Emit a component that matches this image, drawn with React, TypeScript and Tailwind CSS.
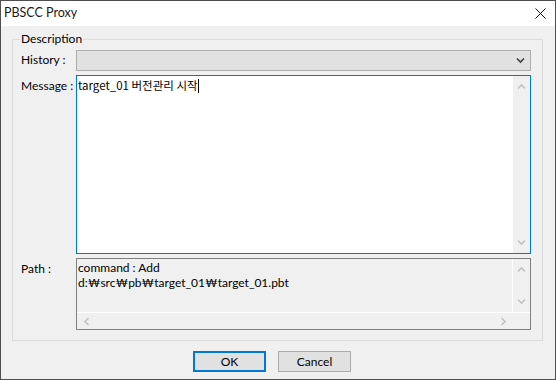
import React from "react"

const font = { fontFamily: 'Lato, "Noto Sans CJK KR", sans-serif' }

function Chevron({ dir, color = "#c2c2c2" }: { dir: "up" | "down" | "left" | "right"; color?: string }) {
    const rot = { down: 0, up: 180, left: 90, right: -90 }[dir]
    return (
        <svg width="9" height="9" viewBox="0 0 9 9" style={{ transform: `rotate(${rot}deg)` }}>
            <path d="M1 2.5 L4.5 6 L8 2.5" fill="none" stroke={color} strokeWidth="1.6" />
        </svg>
    )
}

function VScroll() {
    return (
        <div className="w-[17px] shrink-0 flex flex-col items-center justify-between py-[6px] bg-[#f0f0f0]">
            <Chevron dir="up" />
            <Chevron dir="down" />
        </div>
    )
}

export default function App() {
    return (
        <div
            className="w-[556px] h-[380px] border border-[#4f4f4f] bg-[#f0f0f0] flex flex-col text-[12px] text-black leading-none"
            style={font}
        >
            {/* title bar */}
            <div className="h-[25px] bg-white flex items-center justify-between pl-[3px] pr-[9px]">
                <span className="text-[12.5px] text-[#1a1a1a]">PBSCC Proxy</span>
                <svg width="11" height="11" viewBox="0 0 11 11">
                    <path d="M0.5 0.5 L10.5 10.5 M10.5 0.5 L0.5 10.5" stroke="#111" strokeWidth="1" />
                </svg>
            </div>

            {/* group box */}
            <div className="relative mt-[13px] ml-[11px] w-[531px] h-[302px] border border-[#dcdcdc] pt-[10px] pl-[8px]">
                <span className="absolute left-[7px] top-[-7px] bg-[#f0f0f0] px-[1px]">Description</span>

                <div className="flex flex-col gap-[4px]">
                    <div className="flex">
                        <span className="w-[55px] shrink-0 whitespace-nowrap pt-[4px]">History :</span>
                        <div className="w-[455px] h-[21px] border border-[#adadad] bg-[#e1e1e1] flex items-center justify-end pr-[5px]">
                            <Chevron dir="down" color="#404040" />
                        </div>
                    </div>

                    <div className="flex">
                        <span className="w-[55px] shrink-0 whitespace-nowrap pt-[5px]">Message :</span>
                        <div className="w-[455px] h-[179px] border border-[#0078d7] bg-white flex">
                            <div className="flex-1 pl-[1px] pt-[4px] flex items-start">
                                <span style={{ fontFamily: '"Noto Sans CJK KR", sans-serif' }} className="text-[11.5px]">
                                    target_01 버전관리 시작
                                </span>
                                <span className="w-[1px] h-[14px] bg-black -mt-[1px]" />
                            </div>
                            <VScroll />
                        </div>
                    </div>

                    <div className="flex">
                        <span className="w-[55px] shrink-0 whitespace-nowrap pt-[5px]">Path :</span>
                        <div className="w-[455px] h-[72px] border border-[#808080] bg-[#f0f0f0] flex flex-col">
                            <div className="flex flex-1">
                                <div className="flex-1 pl-[1px] pt-[3px] flex flex-col gap-[3px] border-r border-white">
                                    <span>command : Add</span>
                                    <span>d:₩src₩pb₩target_01₩target_01.pbt</span>
                                </div>
                                <VScroll />
                            </div>
                            <div className="h-[17px] flex border-t border-white">
                                <div className="flex-1 flex items-center justify-between px-[5px]">
                                    <Chevron dir="left" />
                                    <Chevron dir="right" />
                                </div>
                                <div className="w-[17px]" />
                            </div>
                        </div>
                    </div>
                </div>
            </div>

            {/* buttons */}
            <div className="flex gap-[12px] mt-[10px] ml-[192px]">
                <button className="w-[73px] h-[21px] border-2 border-[#0078d7] bg-[#e1e1e1]">OK</button>
                <button className="w-[73px] h-[21px] border border-[#adadad] bg-[#e1e1e1]">Cancel</button>
            </div>
        </div>
    )
}
